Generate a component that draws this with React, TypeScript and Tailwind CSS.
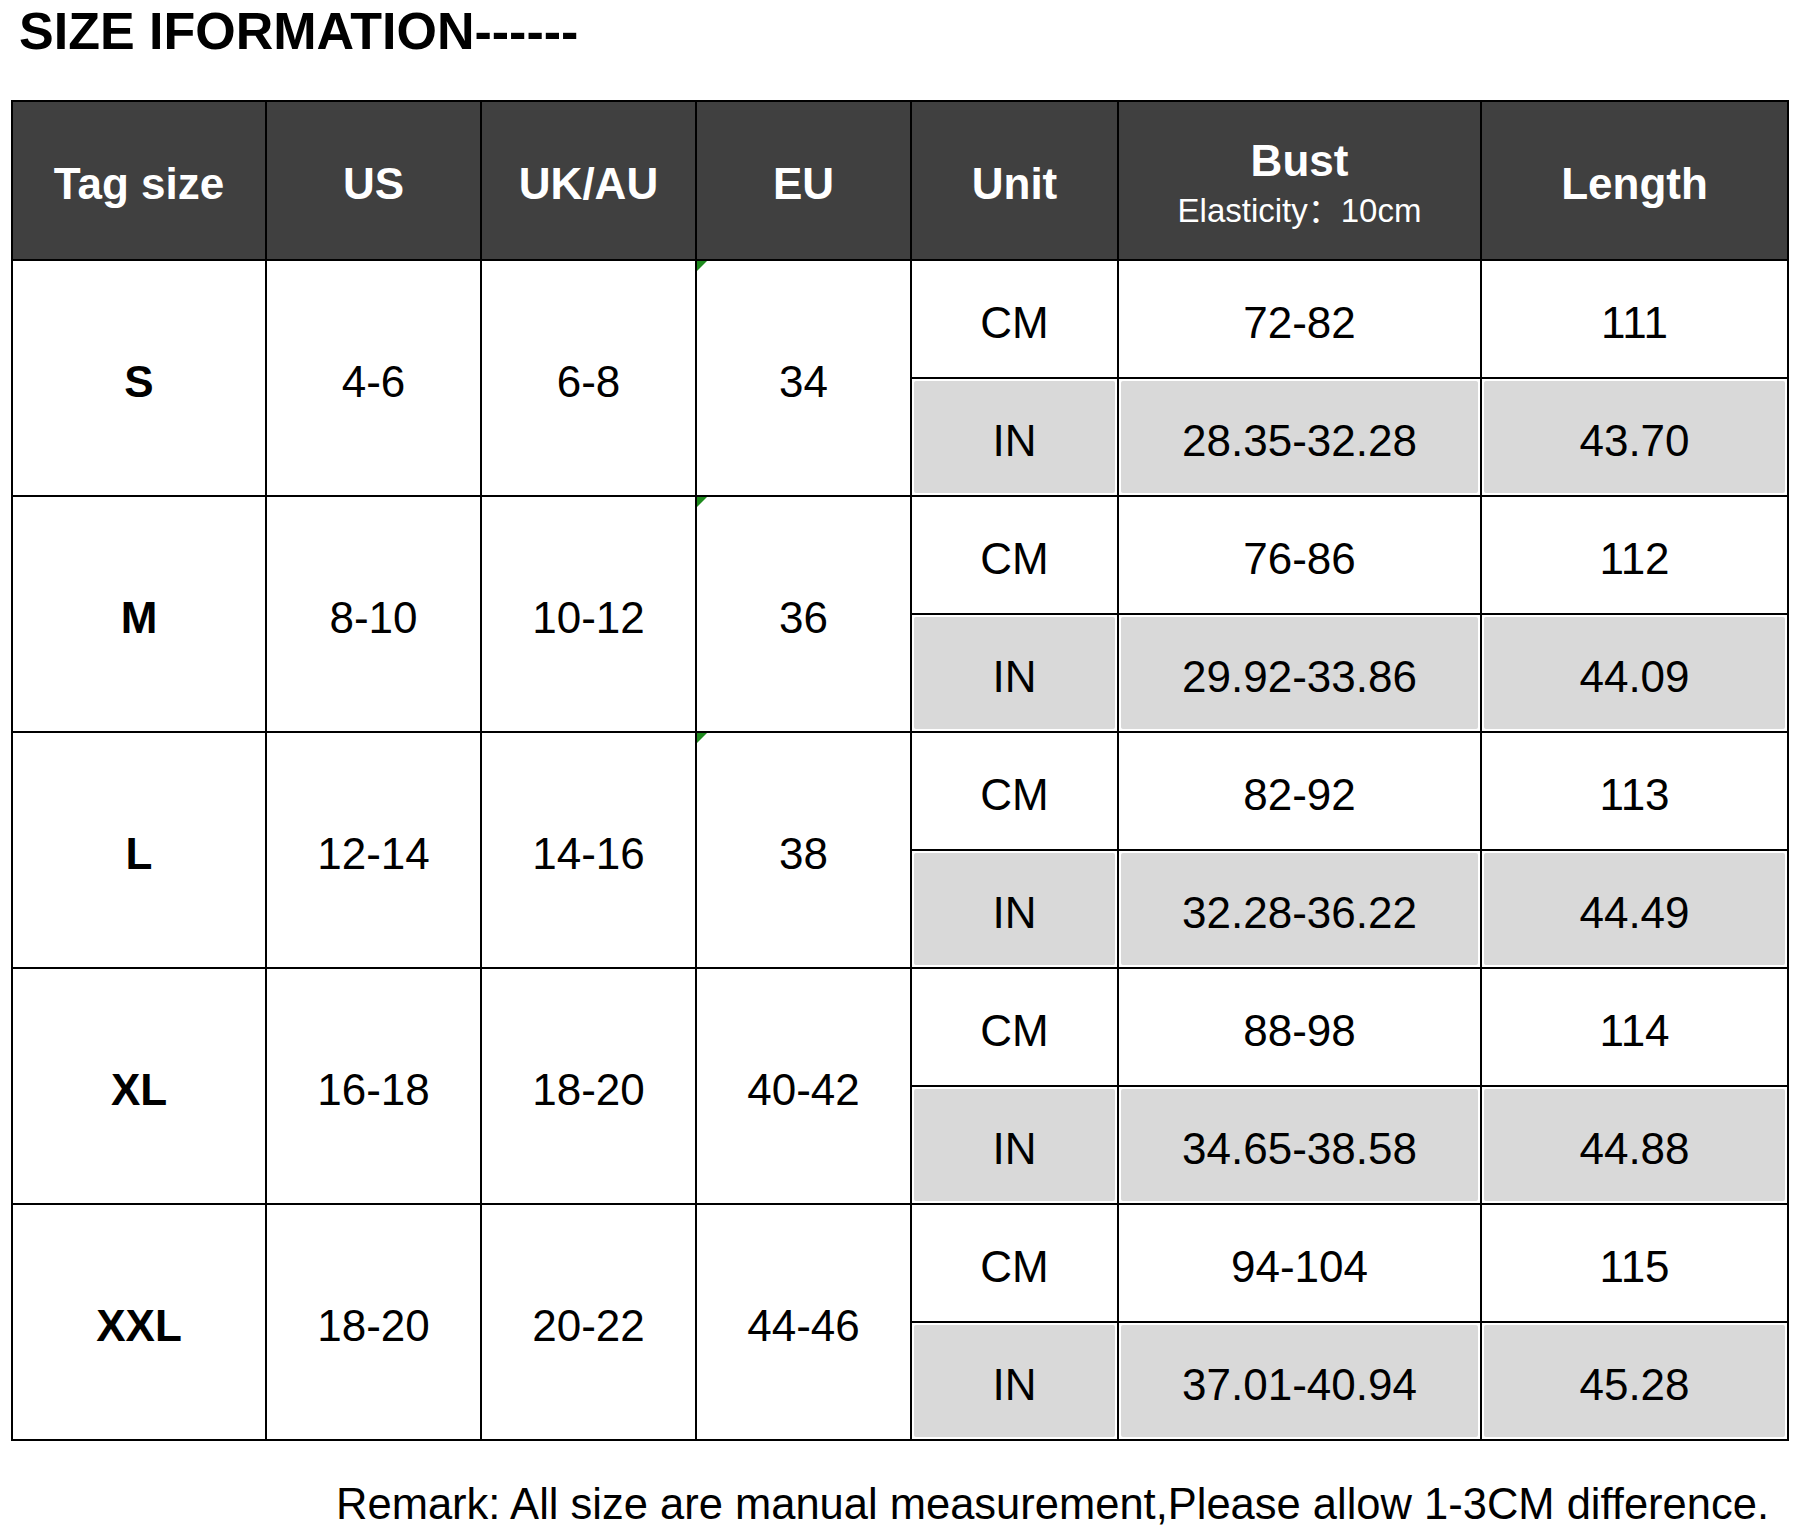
import React from 'react';

const rows = [
  { tag: 'S', us: '4-6', uk: '6-8', eu: '34', cm: ['72-82', '111'], inch: ['28.35-32.28', '43.70'], mark: true },
  { tag: 'M', us: '8-10', uk: '10-12', eu: '36', cm: ['76-86', '112'], inch: ['29.92-33.86', '44.09'], mark: true },
  { tag: 'L', us: '12-14', uk: '14-16', eu: '38', cm: ['82-92', '113'], inch: ['32.28-36.22', '44.49'], mark: true },
  { tag: 'XL', us: '16-18', uk: '18-20', eu: '40-42', cm: ['88-98', '114'], inch: ['34.65-38.58', '44.88'], mark: false },
  { tag: 'XXL', us: '18-20', uk: '20-22', eu: '44-46', cm: ['94-104', '115'], inch: ['37.01-40.94', '45.28'], mark: false },
];

const headers = ['Tag size', 'US', 'UK/AU', 'EU', 'Unit'];

// plain white cell
const Cell = ({ children, span = false, bold = false }: { children: React.ReactNode; span?: boolean; bold?: boolean }) => (
  <div
    className={`flex items-center justify-center bg-white pt-[7px] text-[44px] leading-none text-black ${span ? 'row-span-2' : ''} ${bold ? 'font-bold' : ''}`}
  >
    {children}
  </div>
);

// grey "IN" cell, inset a little like the spreadsheet fill
const GreyCell = ({ children }: { children: React.ReactNode }) => (
  <div className="flex bg-white p-[2px]">
    <div className="flex flex-1 items-center justify-center rounded-[2px] bg-[#d9d9d9] pt-[7px] text-[44px] leading-none text-black">
      {children}
    </div>
  </div>
);

const App = () => {
  return (
    <div className="min-h-[1528px] w-[1800px] bg-white font-['Liberation_Sans','Noto_Sans_CJK_SC',Arial,sans-serif]">
      <div className="pl-[19px] pt-[5px] text-[52px] font-bold leading-none text-black">SIZE IFORMATION------</div>

      <div className="ml-[11px] mt-[43px] grid w-[1778px] grid-cols-[252px_213px_213px_213px_205px_361px_305px] grid-rows-[157px_repeat(10,116px)] gap-[2px] bg-black p-[2px]">
        {/* header */}
        {headers.map((h) => (
          <div key={h} className="flex items-center justify-center bg-[#404040] pt-[7px] text-[44px] font-bold leading-none text-white">
            {h}
          </div>
        ))}
        <div className="flex flex-col items-center justify-center bg-[#404040] pt-[8px] text-white">
          <span className="text-[44px] font-bold leading-[52px]">Bust</span>
          <span className="text-[33px] leading-[48px]">Elasticity：10cm</span>
        </div>
        <div className="flex items-center justify-center bg-[#404040] pt-[7px] text-[44px] font-bold leading-none text-white">Length</div>

        {/* body */}
        {rows.map((r) => (
          <React.Fragment key={r.tag}>
            <Cell span bold>{r.tag}</Cell>
            <Cell span>{r.us}</Cell>
            <Cell span>{r.uk}</Cell>
            <div className="relative row-span-2 flex items-center justify-center bg-white pt-[7px] text-[44px] leading-none text-black">
              {r.mark && (
                <svg className="absolute left-0 top-0" width="10" height="10" viewBox="0 0 10 10">
                  <polygon points="0,0 10,0 0,10" fill="#1e8a1e" />
                </svg>
              )}
              {r.eu}
            </div>
            <Cell>CM</Cell>
            <Cell>{r.cm[0]}</Cell>
            <Cell>{r.cm[1]}</Cell>
            <GreyCell>IN</GreyCell>
            <GreyCell>{r.inch[0]}</GreyCell>
            <GreyCell>{r.inch[1]}</GreyCell>
          </React.Fragment>
        ))}
      </div>

      <div className="mt-[42px] pr-[31px] text-right text-[43.5px] leading-none text-black">
        Remark: All size are manual measurement,Please allow 1-3CM difference.
      </div>
    </div>
  );
};

export default App;
